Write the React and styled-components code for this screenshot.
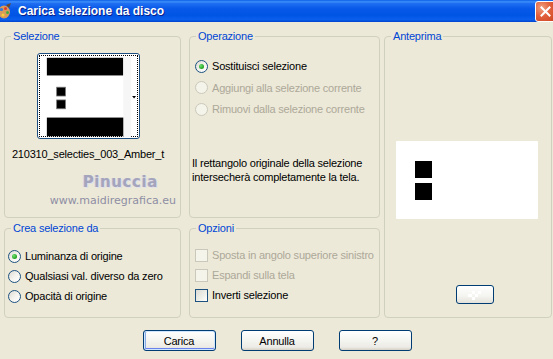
import React from "react";
import styled, { createGlobalStyle, css } from "styled-components";

const GlobalStyle = createGlobalStyle`
  html, body { margin: 0; padding: 0; background: #ECE9D8; }
  body { font-family: "Liberation Sans", Arial, sans-serif; font-size: 11px; letter-spacing: -0.2px; color: #000; }
  * { box-sizing: border-box; }
`;

const Window = styled.div`
  width: 553px;
  height: 359px;
  overflow: hidden;
  background: #ECE9D8;
  display: flex;
  flex-direction: column;
`;

const TitleBar = styled.div`
  height: 22px;
  flex: none;
  display: flex;
  align-items: center;
  background: linear-gradient(
    to bottom,
    #0a5fe6 0%,
    #3d8efa 8%,
    #1f6ef2 16%,
    #0758e8 40%,
    #0055e5 70%,
    #0b5fec 88%,
    #0452e0 95%,
    #0340c8 100%
  );
`;

const TitleIcon = styled.svg`
  width: 14px;
  height: 16px;
  margin-left: -2px;
  flex: none;
`;

const TitleText = styled.span`
  margin-left: 6px;
  color: #fff;
  font-family: "Liberation Sans", Arial, sans-serif;
  font-weight: bold;
  font-size: 12px;
  letter-spacing: 0;
  text-shadow: 1px 1px 0 #0a1e8a;
  flex: 1;
`;

const CloseButton = styled.div`
  width: 21px;
  height: 21px;
  margin-right: -3px;
  border: 1px solid #fff;
  border-radius: 3px;
  background: radial-gradient(circle at 30% 30%, #f0a080 0%, #e2603c 45%, #cc4421 100%);
  display: flex;
  align-items: center;
  justify-content: center;
  flex: none;
`;

const Body = styled.div`
  display: flex;
  padding: 8px 0 0 4px;
`;

const Column = styled.div`
  display: flex;
  flex-direction: column;
  gap: 4px;
  width: ${(p) => p.$width}px;
  margin-left: ${(p) => p.$offset || 0}px;
`;

const Group = styled.fieldset`
  margin: 0;
  padding: 0;
  border: 1px solid #D0D0BF;
  border-radius: 4px;
  height: ${(p) => p.$height}px;
  width: ${(p) => (p.$width ? p.$width + "px" : "auto")};
  margin-left: ${(p) => p.$offset || 0}px;
  display: flex;
  flex-direction: column;
  min-width: 0;
`;

const Legend = styled.legend`
  margin-left: 6px;
  padding: 0 2px;
  color: #0046D5;
  font-size: 11px;
  line-height: 13px;
`;

/* Selezione */
const ComboThumb = styled.div`
  margin: 10px 0 0 32px;
  width: 103px;
  height: 86px;
  border: 1px solid #1C4D80;
  border-radius: 3px;
  background: #fff;
  padding: 1px;
`;

const FocusRect = styled.div`
  width: 100%;
  height: 100%;
  border: 1px dotted #000;
  display: flex;
`;

const FileName = styled.div`
  margin: 8px 0 0 6px;
  width: 154px;
  height: 14px;
  display: flex;
  justify-content: center;
  white-space: nowrap;
  line-height: 14px;
`;

const Watermark = styled.div`
  margin-top: 14px;
  display: flex;
  flex-direction: column;
  align-items: flex-end;
  padding-right: 4px;
  line-height: 1;
`;

const WmTitle = styled.span`
  font-family: "DejaVu Sans", Verdana, sans-serif;
  font-size: 15px;
  font-weight: bold;
  letter-spacing: 0.6px;
  color: #a4a4bc;
  text-shadow: 1px 1px 0 #e0e0ea, -1px 0 0 #d6d6e2;
  margin-right: 18px;
`;

const WmUrl = styled.span`
  font-family: "DejaVu Sans", Verdana, sans-serif;
  font-size: 11px;
  color: #8e8ea4;
  margin-top: 5px;
  letter-spacing: 0;
`;

/* Radios & checks */
const OptionList = styled.div`
  display: flex;
  flex-direction: column;
  gap: ${(p) => p.$gap}px;
  padding: ${(p) => p.$pad};
`;

const OptionRow = styled.label`
  display: flex;
  align-items: center;
  height: 14px;
  gap: 4px;
  color: ${(p) => (p.$disabled ? "#ACA899" : "#000")};
  white-space: nowrap;
`;

const RadioCircle = styled.span`
  width: 13px;
  height: 13px;
  border-radius: 50%;
  flex: none;
  display: flex;
  align-items: center;
  justify-content: center;
  ${(p) =>
    p.$disabled
      ? css`
          border: 1px solid #CAC8BB;
          background: #F5F4EA;
        `
      : css`
          border: 1px solid #1C5180;
          background: linear-gradient(135deg, #DCD9D1 0%, #F4F3EE 50%, #fff 100%);
        `}
`;

const RadioDot = styled.span`
  width: 5px;
  height: 5px;
  border-radius: 50%;
  background: radial-gradient(circle at 35% 35%, #6fe06f 0%, #21A121 70%);
`;

const CheckBox = styled.span`
  width: 13px;
  height: 13px;
  flex: none;
  ${(p) =>
    p.$disabled
      ? css`
          border: 1px solid #CAC8BB;
          background: #F5F4EA;
        `
      : css`
          border: 1px solid #1C5180;
          background: linear-gradient(135deg, #DCDCD7 0%, #F0F0EA 60%, #fff 100%);
        `}
`;

const Note = styled.div`
  margin: 40px 0 0 2px;
  line-height: 14px;
`;

/* Anteprima */
const PreviewBox = styled.div`
  margin: 98px 0 0 11px;
  width: 142px;
  height: 78px;
  background: #fff;
  border-radius: 1px;
  padding: 20px 0 0 19px;
  display: flex;
  flex-direction: column;
  gap: 5px;
`;

const PreviewSquare = styled.div`
  width: 17px;
  height: 17px;
  background: #000;
`;

const SmallButton = styled.div`
  margin: 66px 0 0 71px;
  width: 38px;
  height: 19px;
  border: 1px solid #003C74;
  border-radius: 3px;
  background: linear-gradient(to bottom, #fff 0%, #F4F4F0 60%, #E3E2DA 100%);
  display: flex;
  align-items: center;
  justify-content: center;
`;

/* Bottom buttons */
const ButtonRow = styled.div`
  display: flex;
  justify-content: center;
  gap: 25px;
  margin-top: 12px;
  padding-left: 1px;
`;

const Button = styled.div`
  width: 73px;
  height: 21px;
  border: 1px solid #003C74;
  border-radius: 3px;
  background: linear-gradient(to bottom, #FFFFFF 0%, #F4F4F0 50%, #ECEBE6 85%, #D6D0C5 100%);
  display: flex;
  align-items: center;
  justify-content: center;
  font-size: 11px;
  color: #000;
  ${(p) =>
    p.$default &&
    css`
      box-shadow: inset 0 0 0 1px #CEE7FF, inset 0 -1px 0 1px #6982EE, inset 1px 0 0 1px #89ADE4;
    `}
`;

function Radio({ checked, disabled, children }) {
  return (
    <OptionRow $disabled={disabled}>
      <RadioCircle $disabled={disabled}>{checked && <RadioDot />}</RadioCircle>
      {children}
    </OptionRow>
  );
}

function Check({ disabled, children }) {
  return (
    <OptionRow $disabled={disabled}>
      <CheckBox $disabled={disabled} />
      {children}
    </OptionRow>
  );
}

export default function App() {
  return (
    <>
      <GlobalStyle />
      <Window>
        <TitleBar>
          <TitleIcon viewBox="0 0 14 16">
            <ellipse cx="6" cy="9" rx="6" ry="6.5" fill="#d99a5a" />
            <circle cx="3.5" cy="6.5" r="1.6" fill="#3a7bd5" />
            <circle cx="7.5" cy="5.5" r="1.5" fill="#e23a2a" />
            <circle cx="9.5" cy="9.5" r="1.5" fill="#3cb043" />
            <circle cx="5" cy="12" r="1.5" fill="#f2d23a" />
            <path d="M8 2 L13 0 L11 5 Z" fill="#6b4a2a" />
          </TitleIcon>
          <TitleText>Carica selezione da disco</TitleText>
          <CloseButton>
            <svg width="11" height="11" viewBox="0 0 11 11">
              <path d="M1.5 1.5 L9.5 9.5 M9.5 1.5 L1.5 9.5" stroke="#fff" strokeWidth="2" strokeLinecap="square" />
            </svg>
          </CloseButton>
        </TitleBar>

        <Body>
          <Column $width={177}>
            <Group $height={188}>
              <Legend>Selezione</Legend>
              <ComboThumb>
                <FocusRect>
                  <svg width="99" height="82" viewBox="0 0 99 82">
                    <rect x="7" y="1" width="78" height="18" fill="#000" />
                    <rect x="85" y="0" width="8" height="82" fill="#f6f6f6" />
                    <rect x="17" y="31" width="9" height="9" fill="#000" stroke="#777" strokeWidth="0.8" />
                    <rect x="17" y="44" width="9" height="9" fill="#000" stroke="#777" strokeWidth="0.8" />
                    <rect x="7" y="62" width="78" height="19" fill="#000" />
                    <path d="M94 40 L98 40 L96 42.5 Z" fill="#000" />
                  </svg>
                </FocusRect>
              </ComboThumb>
              <FileName>
                <span>210310_selecties_003_Amber_t</span>
              </FileName>
              <Watermark>
                <WmTitle>Pinuccia</WmTitle>
                <WmUrl>www.maidiregrafica.eu</WmUrl>
              </Watermark>
            </Group>
            <Group $height={96}>
              <Legend>Crea selezione da</Legend>
              <OptionList $gap={6} $pad="14px 0 0 3px">
                <Radio checked>Luminanza di origine</Radio>
                <Radio>Qualsiasi val. diverso da zero</Radio>
                <Radio>Opacità di origine</Radio>
              </OptionList>
            </Group>
          </Column>

          <Column $width={191} $offset={8}>
            <Group $height={188}>
              <Legend>Operazione</Legend>
              <OptionList $gap={7.5} $pad="16px 0 0 5px">
                <Radio checked>Sostituisci selezione</Radio>
                <Radio disabled>Aggiungi alla selezione corrente</Radio>
                <Radio disabled>Rimuovi dalla selezione corrente</Radio>
              </OptionList>
              <Note>
                Il rettangolo originale della selezione
                <br />
                intersecherà completamente la tela.
              </Note>
            </Group>
            <Group $height={96}>
              <Legend>Opzioni</Legend>
              <OptionList $gap={6} $pad="13px 0 0 5px">
                <Check disabled>Sposta in angolo superiore sinistro</Check>
                <Check disabled>Espandi sulla tela</Check>
                <Check>Inverti selezione</Check>
              </OptionList>
            </Group>
          </Column>

          <Group $height={288} $width={168} $offset={4}>
            <Legend>Anteprima</Legend>
            <PreviewBox>
              <PreviewSquare />
              <PreviewSquare />
            </PreviewBox>
            <SmallButton>
              <svg width="14" height="10" viewBox="0 0 14 10">
                <rect x="0" y="4" width="4" height="3" fill="#fff" />
                <rect x="4" y="1" width="3" height="3" fill="#fff" />
                <rect x="7" y="4" width="3" height="3" fill="#fff" />
                <rect x="10" y="1" width="3" height="3" fill="#fff" />
                <rect x="4" y="7" width="3" height="3" fill="#fff" />
              </svg>
            </SmallButton>
          </Group>
        </Body>

        <ButtonRow>
          <Button $default>Carica</Button>
          <Button>Annulla</Button>
          <Button>?</Button>
        </ButtonRow>
      </Window>
    </>
  );
}
